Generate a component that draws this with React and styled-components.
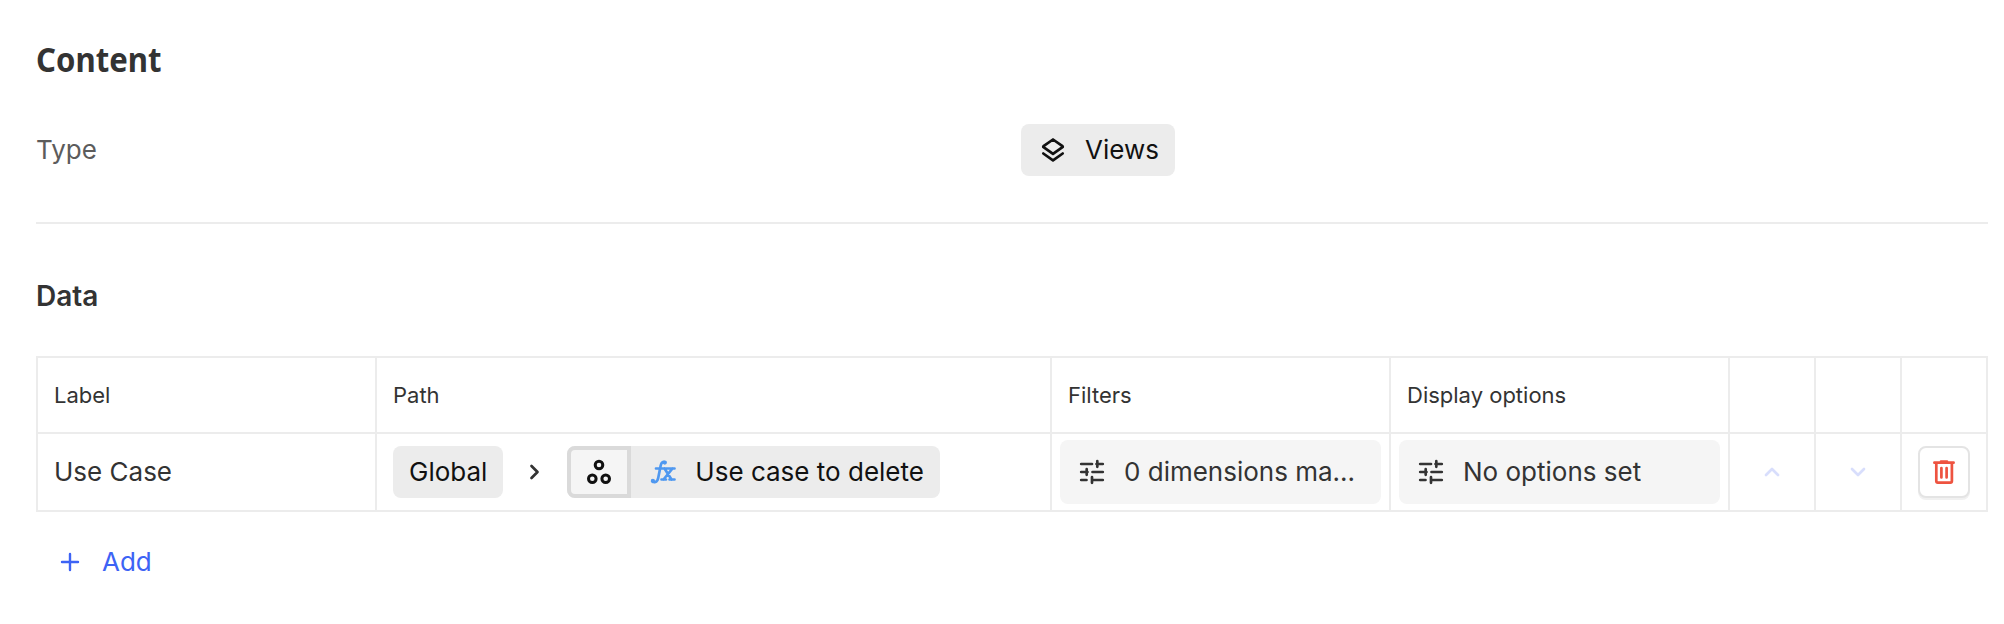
import styled, {createGlobalStyle} from 'styled-components'

const rows = [
    {
        label: 'Use Case',
        root: 'Global',
        path: 'Use case to delete',
        filters: '0 dimensions ma...',
        options: 'No options set',
    },
]

function ViewsIcon(){
    return(
        <Icon viewBox='0 0 32 32' $size={32}>
            <path d='m16 5.500 9.500 6.700a.6.600 0 0 1 0 1L16 19.900l-9.500-6.700a.6.600 0 0 1 0-1Z' />
            <path d='m6.300 19.500 9.700 6.800 9.700-6.800' />
        </Icon>
    )
}

function NodesIcon(){
    return(
        <Icon viewBox='0 0 32 32' $size={32} $stroke={3}>
            <circle cx='16' cy='9' r='3.8' />
            <circle cx='9.3' cy='22.7' r='3.8' />
            <circle cx='22.7' cy='22.7' r='3.8' />
        </Icon>
    )
}

function FormulaIcon(){
    return(
        <Formula viewBox='0 0 26 26' $size={26}>
            <path d='M2.500 21.500c1 2.600 4.700 2.300 5.700-2.500L10.700 6.500c.7-3.200 2.300-4.300 4.300-3.300M6 9.500h18.500M14.500 9.500l7 11M22.500 9.500l-9 11M11.500 20.500h4.500M19.500 20.500h5' />
            <circle cx='2.900' cy='22' r='.8' />
            <circle cx='14.800' cy='3.600' r='.8' />
        </Formula>
    )
}

function TuneIcon(){
    return(
        <Icon viewBox='0 0 32 32' $size={32}>
            <path d='M5.200 8h10.800M20.500 8h6.300M21.300 5.200v5.600M5.200 16h6.300M10.700 13.200v5.600M16.500 16h10.300M5.200 24h5.300M16 21.200v5.600M16 24h10.800' />
        </Icon>
    )
}

function TrashIcon(){
    return(
        <Icon viewBox='0 0 24 26' $width={24} $size={26}>
            <path d='M2.400 3.700h19.200M9 2.500h6M4.300 4v18.100a1.500 1.500 0 0 0 1.500 1.500h12.600a1.500 1.500 0 0 0 1.500-1.500V4M9.400 9v9.500M14.600 9v9.500' />
        </Icon>
    )
}

function Tools({text}){
    return(
        <Button>
            <TuneIcon />
            <ButtonText>{text}</ButtonText>
        </Button>
    )
}

function App(){
    return(
        <Page>
            <GlobalStyle />
            <Title>Content</Title>
            <Field>
                <FieldName>Type</FieldName>
                <TypeChip>
                    <ViewsIcon />
                    Views
                </TypeChip>
            </Field>
            <Subtitle>Data</Subtitle>
            <Table>
                <Row $height={74}>
                    <HeadCell>Label</HeadCell>
                    <HeadCell>Path</HeadCell>
                    <HeadCell>Filters</HeadCell>
                    <HeadCell>Display options</HeadCell>
                    <HeadCell />
                    <HeadCell />
                    <HeadCell />
                </Row>
                {rows.map((row) => (
                    <Row key={row.label} $height={78}>
                        <Cell>{row.label}</Cell>
                        <Cell>
                            <Chip>{row.root}</Chip>
                            <Separator viewBox='0 0 12 18' $width={12} $size={18}>
                                <path d='m2.500 3 6 6-6 6' />
                            </Separator>
                            <PathChip>
                                <NodeBox><NodesIcon /></NodeBox>
                                <FormulaIcon />
                                {row.path}
                            </PathChip>
                        </Cell>
                        <ToolCell><Tools text={row.filters} /></ToolCell>
                        <ToolCell><Tools text={row.options} /></ToolCell>
                        <ArrowCell>
                            <Icon viewBox='0 0 18 12' $width={18} $size={12}>
                                <path d='m3 9 6-6 6 6' />
                            </Icon>
                        </ArrowCell>
                        <ArrowCell>
                            <Icon viewBox='0 0 18 12' $width={18} $size={12}>
                                <path d='m3 3 6 6 6-6' />
                            </Icon>
                        </ArrowCell>
                        <Cell>
                            <DeleteButton aria-label='Delete'><TrashIcon /></DeleteButton>
                        </Cell>
                    </Row>
                ))}
            </Table>
            <AddButton>
                <Icon viewBox='0 0 20 20' $size={20} $stroke={2.4}>
                    <path d='M10 2v16M2 10h16' />
                </Icon>
                Add
            </AddButton>
        </Page>
    )
}

export default App

const GlobalStyle = createGlobalStyle`
*{
    box-sizing: border-box;
}
body{
    margin: 0;
    background: #ffffff;
    font-family: Inter, "Liberation Sans", sans-serif;
    font-size: 26px;
    line-height: 30px;
    color: #333333;
}
`
const Page = styled.main`
padding: 35px 16px 0 36px;
`
const Title = styled.h1`
margin: 0 0 1px;
width: max-content;
height: 48px;
line-height: 48px;
font-family: "Noto Sans", "Open Sans", sans-serif;
font-size: 34px;
font-weight: 700;
transform: scaleX(0.915);
transform-origin: left;
`
const Field = styled.div`
display: grid;
grid-template-columns: 985px auto;
justify-content: start;
align-items: center;
height: 140px;
padding: 40px 0 46px;
border-bottom: 2px solid #ececec;
`
const FieldName = styled.span`
color: #5c5c5c;
`
const Chip = styled.span`
display: flex;
align-items: center;
height: 52px;
padding: 0 16px;
border-radius: 8px;
background: #ececec;
color: #111111;
white-space: nowrap;
`
const TypeChip = styled(Chip)`
gap: 16px;
`
const Subtitle = styled.h2`
margin: 52px 0 40px;
line-height: 40px;
font-size: 28px;
font-weight: 600;
`
const Table = styled.div`
border: 2px solid #ececec;
`
const Row = styled.div`
display: grid;
grid-template-columns: 337px 675px 339px 339px 86px 86px 86px;
height: ${(props) => props.$height}px;

& + &{
    border-top: 2px solid #ececec;
}
`
const Cell = styled.div`
display: flex;
align-items: center;
padding: 0 16px;
min-width: 0;

& + &, * + &{
    border-left: 2px solid #ececec;
}
`
const HeadCell = styled(Cell)`
font-size: 22px;
`
const ToolCell = styled(Cell)`
padding: 6px 8px;
align-items: stretch;
`
const ArrowCell = styled(Cell)`
justify-content: center;
padding: 0;
color: #d8defc;
`
const Icon = styled.svg`
flex: none;
width: ${(props) => props.$width || props.$size}px;
height: ${(props) => props.$size}px;
fill: none;
stroke: currentColor;
stroke-width: ${(props) => props.$stroke || 2.7};
stroke-linecap: round;
stroke-linejoin: round;
`
const Separator = styled(Icon)`
margin: 0 26px;
color: #333333;
`
const PathChip = styled(Chip)`
padding-left: 0;
`
const NodeBox = styled.span`
display: flex;
align-items: center;
justify-content: center;
width: 64px;
height: 52px;
border: 4px solid #dadada;
border-radius: 8px 0 0 8px;
background: #f5f5f5;
`
const Formula = styled(Icon)`
margin: 0 19px;
color: #4f98f0;
`
const Button = styled.button`
display: flex;
align-items: center;
gap: 16px;
flex: 1;
min-width: 0;
padding: 0 16px;
border: 0;
border-radius: 8px;
background: #f5f5f5;
font: inherit;
color: #333333;
`
const ButtonText = styled.span`
overflow: hidden;
text-overflow: ellipsis;
white-space: nowrap;
`
const DeleteButton = styled.button`
display: flex;
align-items: center;
justify-content: center;
width: 52px;
height: 52px;
padding: 0;
border: 2px solid #e4e4e4;
border-radius: 8px;
background: #ffffff;
box-shadow: 0 2px 0 #f1f1f1;
color: #ee5340;
`
const AddButton = styled.button`
display: flex;
align-items: center;
gap: 22px;
height: 52px;
margin-top: 24px;
padding: 0 24px;
border: 0;
background: none;
font: inherit;
color: #3d63f5;
`
